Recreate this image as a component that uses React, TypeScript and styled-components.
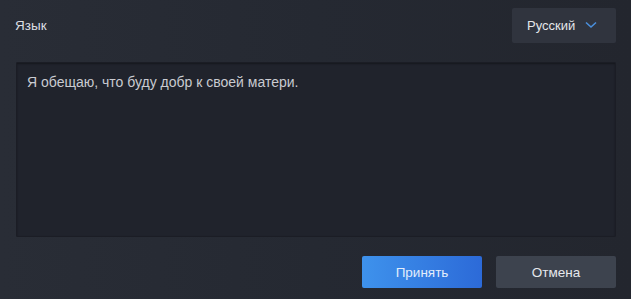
import React from 'react'
import styled, { createGlobalStyle } from 'styled-components'

const GlobalStyle = createGlobalStyle`
  html, body {
    margin: 0;
    padding: 0;
    background: #262a33;
  }
  body {
    font-family: "Liberation Sans", Arial, sans-serif;
  }
`

const StyledDialog = styled.div`
  width: 631px;
  height: 299px;
  box-sizing: border-box;
  padding: 8px 15px 0 15px;
  display: flex;
  flex-direction: column;
  background: linear-gradient(90deg, #292d36 0%, #252932 50%, #23262e 100%);
`

const StyledHeader = styled.div`
  display: flex;
  justify-content: space-between;
  align-items: center;
  height: 35px;
`

const StyledLabel = styled.span`
  font-size: 13.5px;
  color: #dcdee3;
`

const StyledSelect = styled.button`
  width: 104px;
  height: 35px;
  display: flex;
  align-items: center;
  gap: 10px;
  padding: 0 0 0 15px;
  box-sizing: border-box;
  border: none;
  border-radius: 2px;
  background: #30343e;
  color: #e4e6ea;
  font-family: inherit;
  font-size: 13px;
  cursor: pointer;
`

const StyledChevron = styled.svg`
  width: 12px;
  height: 8px;
  margin-top: -2px;
`

const StyledTextArea = styled.textarea`
  margin: 19px 0 0 1px;
  height: 175px;
  box-sizing: border-box;
  padding: 11px 10px;
  resize: none;
  border: 1px solid #1b1d25;
  border-radius: 1px;
  background: #20232c;
  box-shadow: inset 0 1px 2px rgba(0, 0, 0, 0.35);
  color: #c9cbd1;
  font-family: inherit;
  font-size: 14px;
  line-height: 17px;
  outline: none;
`

const StyledActions = styled.div`
  display: flex;
  justify-content: flex-end;
  gap: 14px;
  margin-top: 19px;
`

const StyledButton = styled.button<{ $primary?: boolean }>`
  width: 120px;
  height: 32px;
  border: none;
  border-radius: 2px;
  font-family: inherit;
  font-size: 13.5px;
  cursor: pointer;
  color: ${({ $primary }) => ($primary ? '#e2edfb' : '#e6e8ec')};
  background: ${({ $primary }) =>
    $primary ? 'linear-gradient(90deg, #3e92ec 0%, #2c6ad8 100%)' : '#3d434e'};
`

const App = () => {
  return (
    <>
      <GlobalStyle />
      <StyledDialog>
        <StyledHeader>
          <StyledLabel>Язык</StyledLabel>
          <StyledSelect>
            Русский
            <StyledChevron viewBox="0 0 12 8">
              <path d="M1 1.5 L6 6 L11 1.5" fill="none" stroke="#4a8fdc" strokeWidth="1.6" />
            </StyledChevron>
          </StyledSelect>
        </StyledHeader>
        <StyledTextArea readOnly defaultValue="Я обещаю, что буду добр к своей матери." />
        <StyledActions>
          <StyledButton $primary>Принять</StyledButton>
          <StyledButton>Отмена</StyledButton>
        </StyledActions>
      </StyledDialog>
    </>
  )
}

export default App
